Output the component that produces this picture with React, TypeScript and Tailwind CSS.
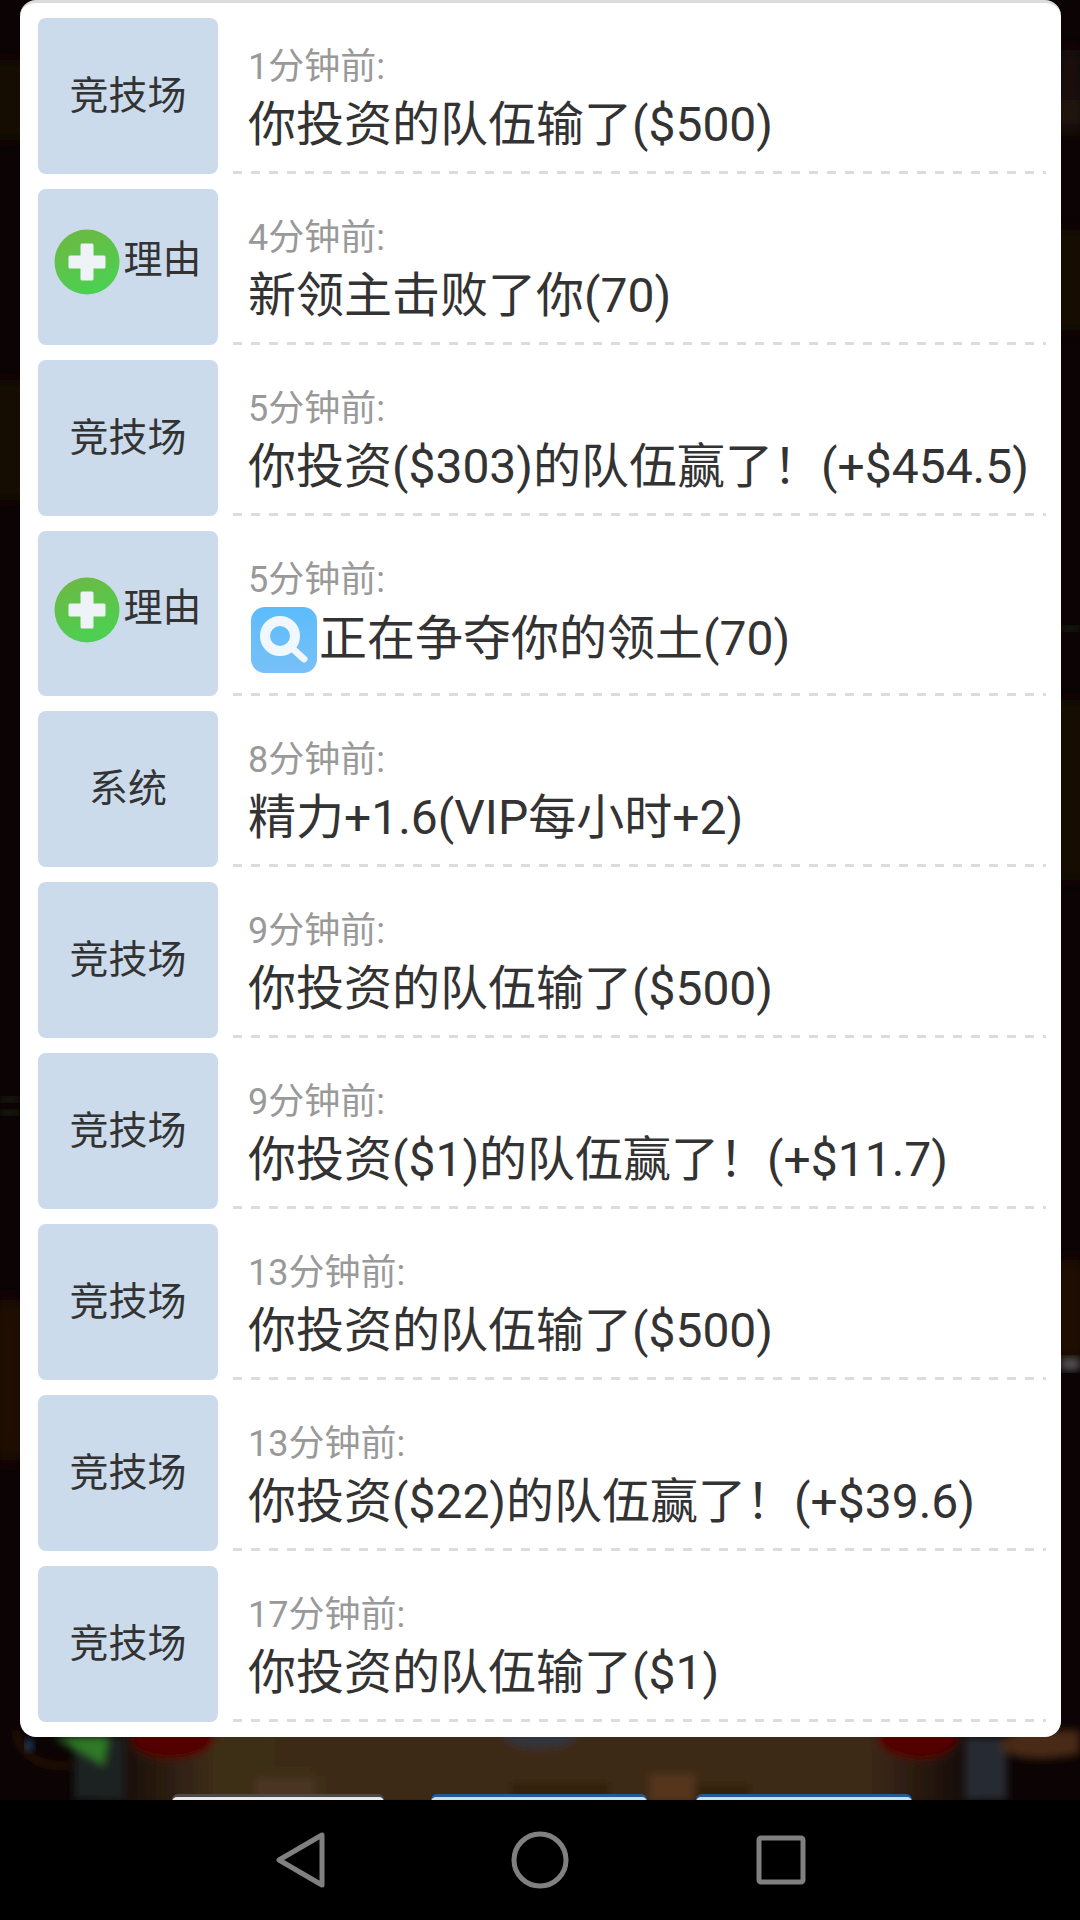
const rows = [
  { tag: "竞技场", time: "1分钟前:", text: "你投资的队伍输了($500)" },
  { tag: "理由", plus: true, time: "4分钟前:", text: "新领主击败了你(70)" },
  { tag: "竞技场", time: "5分钟前:", text: "你投资($303)的队伍赢了！(+$454.5)" },
  { tag: "理由", plus: true, tall: true, time: "5分钟前:", text: "正在争夺你的领土(70)", avatar: true },
  { tag: "系统", time: "8分钟前:", text: "精力+1.6(VIP每小时+2)" },
  { tag: "竞技场", time: "9分钟前:", text: "你投资的队伍输了($500)" },
  { tag: "竞技场", time: "9分钟前:", text: "你投资($1)的队伍赢了！(+$11.7)" },
  { tag: "竞技场", time: "13分钟前:", text: "你投资的队伍输了($500)" },
  { tag: "竞技场", time: "13分钟前:", text: "你投资($22)的队伍赢了！(+$39.6)" },
  { tag: "竞技场", time: "17分钟前:", text: "你投资的队伍输了($1)" },
];

function PlusIcon() {
  return (
    <svg width="66" height="66" viewBox="0 0 66 66" className="shrink-0 mr-[3px]">
      <defs>
        <linearGradient id="plusBg" x1="0.2" y1="0" x2="0.6" y2="1">
          <stop offset="0" stopColor="#6db843" />
          <stop offset="1" stopColor="#4bd152" />
        </linearGradient>
      </defs>
      <circle cx="33" cy="33" r="32.5" fill="url(#plusBg)" />
      <path d="M28 16h10v12h12v10H38v12H28V38H16V28h12z" fill="#eef3f8" stroke="#eef3f8" strokeWidth="3" strokeLinejoin="round" />
    </svg>
  );
}

function SearchAvatar() {
  return (
    <svg width="66" height="66" viewBox="0 0 66 66" className="shrink-0 ml-[3px] mr-[2px] mt-[3px]">
      <defs>
        <linearGradient id="searchBg" x1="0" y1="0" x2="0" y2="1">
          <stop offset="0" stopColor="#5cbcfb" />
          <stop offset="1" stopColor="#78c0f8" />
        </linearGradient>
      </defs>
      <rect width="66" height="66" rx="14" fill="url(#searchBg)" />
      <circle cx="29" cy="29" r="15" fill="none" stroke="#f0f7fd" strokeWidth="10" />
      <path d="M42 42l11 10" stroke="#f0f7fd" strokeWidth="7" strokeLinecap="round" />
    </svg>
  );
}

function Scene() {
  return (
    <svg className="absolute inset-0" width="1080" height="1800" viewBox="0 0 1080 1800">
      <defs>
        <filter id="soft" x="-20%" y="-20%" width="140%" height="140%"><feGaussianBlur stdDeviation="4" /></filter>
        <filter id="softer" x="-50%" y="-20%" width="200%" height="140%"><feGaussianBlur stdDeviation="9" /></filter>
        <linearGradient id="wood" x1="0" y1="0" x2="1" y2="0">
          <stop offset="0" stopColor="#3e2d19" stopOpacity="0" />
          <stop offset="0.14" stopColor="#3e2d19" />
          <stop offset="0.86" stopColor="#3e2a18" />
          <stop offset="1" stopColor="#3e2a18" stopOpacity="0" />
        </linearGradient>
      </defs>
      <rect width="1080" height="1800" fill="#0b0304" />
      {/* side bits of the game behind the dialog */}
      <g filter="url(#softer)">
        <rect x="0" y="60" width="20" height="80" fill="#1e0806" />
        <rect x="1061" y="50" width="19" height="80" fill="#240c08" />
        <rect x="1061" y="100" width="19" height="30" fill="#2a1e0e" />
        <rect x="0" y="380" width="20" height="120" fill="#1c0704" />
        <rect x="1061" y="230" width="19" height="100" fill="#1c0704" />
        <rect x="1061" y="700" width="19" height="180" fill="#1c0904" />
        <rect x="0" y="1300" width="20" height="160" fill="#2a0a04" />
        <rect x="1061" y="1260" width="19" height="100" fill="#2a0a04" />
      </g>
      <rect x="0" y="1097" width="20" height="5" fill="#1c2a14" filter="url(#soft)" />
      <rect x="0" y="1110" width="20" height="5" fill="#1c2a14" filter="url(#soft)" />
      <rect x="1061" y="626" width="19" height="5" fill="#1c2a14" filter="url(#soft)" />
      <rect x="1061" y="1358" width="19" height="12" fill="#55565a" filter="url(#soft)" />
      <g filter="url(#soft)">
        {/* wood floor */}
        <rect x="90" y="1730" width="900" height="75" fill="url(#wood)" />
        <rect x="510" y="1782" width="100" height="20" fill="#33220f" />
        <rect x="650" y="1784" width="100" height="20" fill="#33220f" />
        <rect x="650" y="1774" width="45" height="30" fill="#55361a" />
        <rect x="255" y="1778" width="60" height="25" fill="#4a3620" />
        {/* fruit */}
        <ellipse cx="172" cy="1738" rx="42" ry="22" fill="#520606" />
        <ellipse cx="918" cy="1738" rx="40" ry="22" fill="#520606" />
        {/* pillars */}
        <rect x="74" y="1737" width="50" height="63" fill="#1d2022" />
        <rect x="965" y="1737" width="42" height="63" fill="#262c30" />
        {/* corner ornaments */}
        <path d="M15 1730q10 40 55 35" fill="none" stroke="#2e180e" strokeWidth="5" />
        <path d="M1020 1730q-22 10 -20 18q20 18 80 6v-24z" fill="#4a2a12" />
        <ellipse cx="540" cy="1736" rx="36" ry="12" fill="#33363d" />
      </g>
      <path d="M54 1737h56l-6 30z" fill="#2f7a28" filter="url(#soft)" />
      <path d="M26 1737l8 10l-8 4z" fill="#2a6ea8" filter="url(#soft)" />
      {/* tops of the buttons cut off by the nav bar */}
      <rect x="172" y="1794" width="212" height="12" rx="6" fill="#4a4a4a" />
      <rect x="172" y="1797" width="212" height="10" rx="5" fill="#e8e8e8" />
      <rect x="431" y="1794" width="216" height="12" rx="6" fill="#245a96" />
      <rect x="431" y="1797" width="216" height="10" rx="5" fill="#c5dff2" />
      <rect x="696" y="1794" width="216" height="12" rx="6" fill="#245a96" />
      <rect x="696" y="1797" width="216" height="10" rx="5" fill="#c5dff2" />
    </svg>
  );
}

function Row({ row }: { row: (typeof rows)[number] }) {
  return (
    <div className={`flex ${row.tall ? "h-[165px]" : "h-[156px]"}`}>
      <div
        className={`w-[180px] shrink-0 rounded-lg bg-[#cbdbec] flex items-center justify-center text-[39px] text-[#333] ${
          row.tall ? "pb-[7px]" : row.plus ? "pb-[10px]" : ""
        }`}
      >
        {row.plus && <PlusIcon />}
        <span className={row.plus ? "mb-[3px]" : ""}>{row.tag}</span>
      </div>
      <div className="ml-[15px] flex-1 min-w-0 flex flex-col">
        <div className="flex-1 pl-[15px] pt-[25px]">
          <div className="text-[36px] leading-[48px] text-[#999]">{row.time}</div>
          <div className="flex items-center text-[48px] leading-[68px] whitespace-nowrap text-[#333]">
            {row.avatar && <SearchAvatar />}
            <span>{row.text}</span>
          </div>
        </div>
        <div className="h-[3px] bg-[repeating-linear-gradient(90deg,#dcdcdc_0,#dcdcdc_9px,transparent_9px,transparent_18px)]" />
      </div>
    </div>
  );
}

export default function App() {
  return (
    <div className="w-[1080px] h-[1920px] overflow-hidden bg-black font-['Roboto','Noto_Sans_CJK_SC',sans-serif]">
      <div className="relative h-[1800px]">
        <Scene />
        <div className="relative ml-[20px] w-[1041px] h-[1737px] bg-white rounded-[16px] border-t-[3px] border-[#dcdcdc] pl-[18px] pr-[15px] pt-[15px] flex flex-col gap-[15px]">
          {rows.map((row, i) => (
            <Row key={i} row={row} />
          ))}
        </div>
      </div>

      {/* android nav bar */}
      <div className="h-[120px] bg-black flex items-center justify-center">
        <svg width="54" height="60" viewBox="0 0 54 60" fill="none" stroke="#808080" strokeWidth="5" strokeLinejoin="round">
          <path d="M5 30L48 5V55Z" />
        </svg>
        <svg width="58" height="58" viewBox="0 0 58 58" fill="none" stroke="#808080" strokeWidth="5" className="ml-[183px] mr-[187px]">
          <circle cx="29" cy="29" r="26" />
        </svg>
        <svg width="50" height="50" viewBox="0 0 50 50" fill="none" stroke="#808080" strokeWidth="5" strokeLinejoin="round">
          <rect x="3" y="3" width="44" height="44" rx="2" />
        </svg>
      </div>
    </div>
  );
}
